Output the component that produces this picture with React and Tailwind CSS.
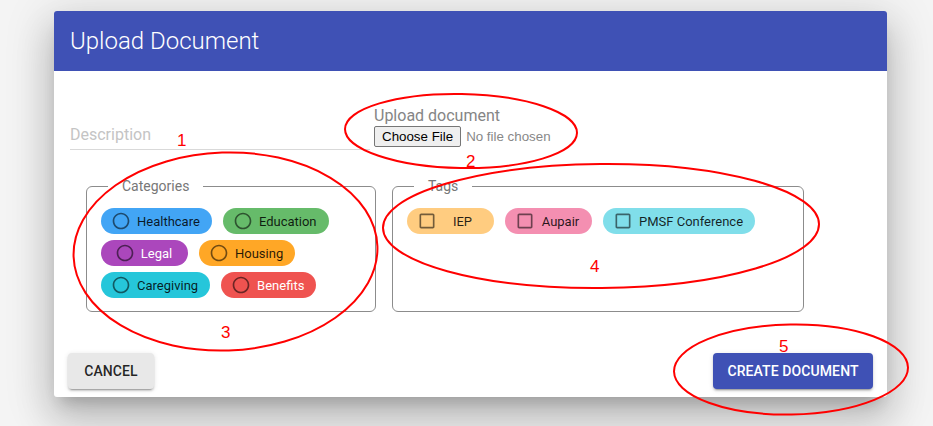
import React from 'react';

const categories = [
  { label: 'Healthcare', cls: 'bg-[#42a5f5] text-black/85' },
  { label: 'Education', cls: 'bg-[#66bb6a] text-black/85' },
  { label: 'Legal', cls: 'bg-[#ab47bc] text-white' },
  { label: 'Housing', cls: 'bg-[#ffa726] text-black/85' },
  { label: 'Caregiving', cls: 'bg-[#26c6da] text-black/85' },
  { label: 'Benefits', cls: 'bg-[#ef5350] text-white' },
];

const tags = [
  { label: 'IEP', cls: 'bg-[#ffcc80]' },
  { label: 'Aupair', cls: 'bg-[#f48fb1]' },
  { label: 'PMSF Conference', cls: 'bg-[#80deea]' },
];

const RadioIcon = () => (
  <svg viewBox="0 0 24 24" className="w-5 h-5 shrink-0" fill="rgba(0,0,0,0.55)">
    <path d="M12 2C6.48 2 2 6.48 2 12s4.48 10 10 10 10-4.48 10-10S17.52 2 12 2zm0 18c-4.42 0-8-3.58-8-8s3.58-8 8-8 8 3.58 8 8-3.58 8-8 8z" />
  </svg>
);

const BoxIcon = () => (
  <svg viewBox="0 0 24 24" className="w-5 h-5 shrink-0" fill="rgba(0,0,0,0.55)">
    <path d="M19 5v14H5V5h14m0-2H5c-1.1 0-2 .9-2 2v14c0 1.1.9 2 2 2h14c1.1 0 2-.9 2-2V5c0-1.1-.9-2-2-2z" />
  </svg>
);

const CategoryChip = ({ label, cls }) => (
  <div className={`inline-flex items-center justify-center h-[26px] min-w-[87px] rounded-full ${cls}`}>
    <span className="ml-[10px] -mr-[6px] flex">
      <RadioIcon />
    </span>
    <span className="px-3 text-[13px] leading-none whitespace-nowrap">{label}</span>
  </div>
);

const TagChip = ({ label, cls }) => (
  <div className={`flex items-center h-[26px] min-w-[87px] rounded-full text-black/85 ${cls}`}>
    <span className="ml-[10px] -mr-[6px] flex">
      <BoxIcon />
    </span>
    <span className="flex-1 px-3 text-center text-[13px] leading-none whitespace-nowrap">{label}</span>
  </div>
);

const Group = ({ title, width, children }) => (
  <fieldset className={`${width} border border-[#8c8c8c] rounded-md pl-[14px] pr-[14px] pt-[12px] pb-[13px]`}>
    <legend className="ml-[7px] px-[14px] text-[14px] leading-[20px] text-[#777]">{title}</legend>
    {children}
  </fieldset>
);

const Annotations = () => (
  <div className="absolute inset-0 pointer-events-none">
    <svg width="933" height="426" className="absolute inset-0" fill="none" stroke="#f00" strokeWidth="2">
      <ellipse cx="461" cy="131" rx="116" ry="37" transform="rotate(1 461 131)" />
      <ellipse cx="225.5" cy="251.5" rx="152" ry="99" transform="rotate(-2 225.5 251.5)" />
      <ellipse cx="601" cy="226" rx="218" ry="62" transform="rotate(-0.5 601 226)" />
      <ellipse cx="791" cy="369.5" rx="117" ry="45" transform="rotate(-1 791 369.5)" />
    </svg>
    <span className="absolute left-[177px] top-[132px] text-[17px] leading-none text-[#f00] font-['Liberation_Sans',sans-serif]">1</span>
    <span className="absolute left-[466px] top-[153px] text-[17px] leading-none text-[#f00] font-['Liberation_Sans',sans-serif]">2</span>
    <span className="absolute left-[221px] top-[324px] text-[17px] leading-none text-[#f00] font-['Liberation_Sans',sans-serif]">3</span>
    <span className="absolute left-[590px] top-[258px] text-[17px] leading-none text-[#f00] font-['Liberation_Sans',sans-serif]">4</span>
    <span className="absolute left-[779px] top-[338px] text-[17px] leading-none text-[#f00] font-['Liberation_Sans',sans-serif]">5</span>
  </div>
);

export default function App() {
  return (
    <div className="relative w-[933px] h-[426px] overflow-hidden bg-[#f4f4f4] pt-[11px] pl-[54px] font-['Roboto',sans-serif]">
      <div className="w-[833px] h-[386px] bg-white rounded-[3px] overflow-hidden flex flex-col shadow-[0px_11px_15px_-7px_rgba(0,0,0,0.2),0px_24px_38px_3px_rgba(0,0,0,0.14),0px_9px_46px_8px_rgba(0,0,0,0.12)]">
        {/* Header */}
        <div className="h-[60px] bg-[#3f51b5] flex items-center px-4">
          <h2 className="text-[24px] text-white font-light leading-none">Upload Document</h2>
        </div>

        {/* Body */}
        <div className="flex-1 px-4 pt-[35px]">
          <div className="flex items-start">
            <div className="w-[300px] pt-[19px] pb-[5px] border-b border-[#d9d9d9]">
              <div className="text-[16px] leading-[19px] text-[#c4c4c4]">Description</div>
            </div>
            <div className="ml-1">
              <div className="text-[16px] leading-[19px] text-[#858585]">Upload document</div>
              <div className="mt-[1px] flex items-center font-['Liberation_Sans',sans-serif] text-[13.33px]">
                <button className="h-[21px] px-[7px] bg-[#efefef] border border-[#767676] rounded-[2px] text-black leading-none">
                  Choose File
                </button>
                <span className="ml-[5px] text-[#888]">No file chosen</span>
              </div>
            </div>
          </div>

          <div className="flex items-stretch gap-4 mt-[26px] ml-4">
            <Group title="Categories" width="w-[290px]">
              <div className="flex flex-wrap gap-x-[11px] gap-y-[6px]">
                {categories.map((c) => (
                  <CategoryChip key={c.label} {...c} />
                ))}
              </div>
            </Group>
            <Group title="Tags" width="w-[412px]">
              <div className="flex flex-wrap gap-x-[11px] gap-y-[6px]">
                {tags.map((t) => (
                  <TagChip key={t.label} {...t} />
                ))}
              </div>
            </Group>
          </div>
        </div>

        {/* Actions */}
        <div className="flex justify-between items-end px-[14px] pb-2">
          <button className="h-9 w-[86px] rounded bg-[#e8e8e8] text-[14px] font-medium tracking-[0.1px] text-black/85 shadow-[0px_3px_1px_-2px_rgba(0,0,0,0.2),0px_2px_2px_0px_rgba(0,0,0,0.14),0px_1px_5px_0px_rgba(0,0,0,0.12)]">
            CANCEL
          </button>
          <button className="h-9 w-[160px] rounded bg-[#3f51b5] text-[14px] font-medium tracking-[0.1px] text-white shadow-[0px_3px_1px_-2px_rgba(0,0,0,0.2),0px_2px_2px_0px_rgba(0,0,0,0.14),0px_1px_5px_0px_rgba(0,0,0,0.12)]">
            CREATE DOCUMENT
          </button>
        </div>
      </div>
      <Annotations />
    </div>
  );
}
